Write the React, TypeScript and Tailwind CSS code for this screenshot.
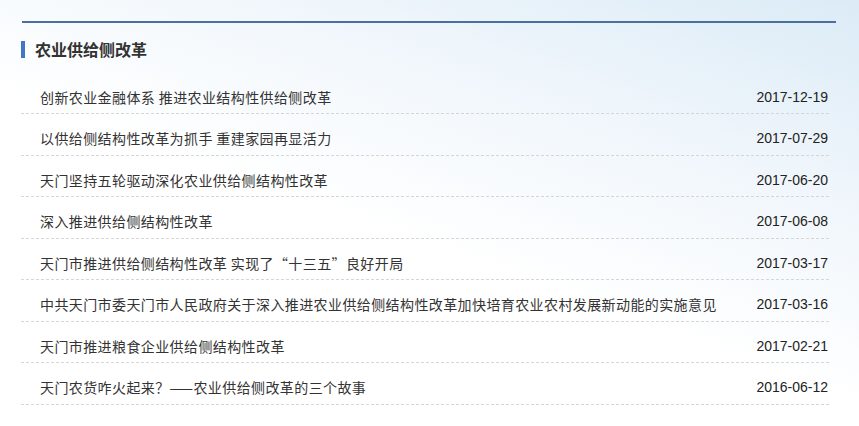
const news = [
  { title: "创新农业金融体系 推进农业结构性供给侧改革", date: "2017-12-19" },
  { title: "以供给侧结构性改革为抓手 重建家园再显活力", date: "2017-07-29" },
  { title: "天门坚持五轮驱动深化农业供给侧结构性改革", date: "2017-06-20" },
  { title: "深入推进供给侧结构性改革", date: "2017-06-08" },
  { title: "天门市推进供给侧结构性改革 实现了“十三五”良好开局", date: "2017-03-17" },
  {
    title: "中共天门市委天门市人民政府关于深入推进农业供给侧结构性改革加快培育农业农村发展新动能的实施意见",
    date: "2017-03-16",
  },
  { title: "天门市推进粮食企业供给侧结构性改革", date: "2017-02-21" },
  { title: "天门农货咋火起来？——农业供给侧改革的三个故事", date: "2016-06-12" },
];

export default function App() {
  return (
    <div className="w-[859px] h-[426px] overflow-hidden bg-[linear-gradient(200deg,#dbebf6_0%,#eef5fb_25%,#ffffff_55%)] pt-[21px] font-['Liberation_Sans','Noto_Sans_CJK_SC',sans-serif] text-[#333]">
      {/* top rule */}
      <div className="ml-[22px] w-[814px] h-[2px] bg-[#4b6f9f]" />

      {/* section title */}
      <div className="ml-[21px] mt-[18px] flex items-center h-[17px]">
        <span className="w-[4px] h-[17px] bg-[#4277c4]" />
        <h2 className="ml-[10px] text-[16px] leading-[17px] font-bold text-[#333] font-['Noto_Sans_CJK_SC',sans-serif]">
          农业供给侧改革
        </h2>
      </div>

      <ul className="ml-[21px] mt-[14.5px] w-[808px]">
        {news.map((item) => (
          <li
            key={item.title}
            className="h-[41.5px] pt-[14px] pl-[19px] pr-[1px] flex justify-between border-b border-dashed border-[#d6d6d6]"
          >
            <a
              href="#"
              className="text-[14px] leading-[20px] tracking-[0.4px] text-[#333] font-['Noto_Sans_CJK_SC',sans-serif] truncate"
            >
              {item.title}
            </a>
            <span className="text-[14px] leading-[20px] text-[#222] shrink-0">{item.date}</span>
          </li>
        ))}
      </ul>
    </div>
  );
}
